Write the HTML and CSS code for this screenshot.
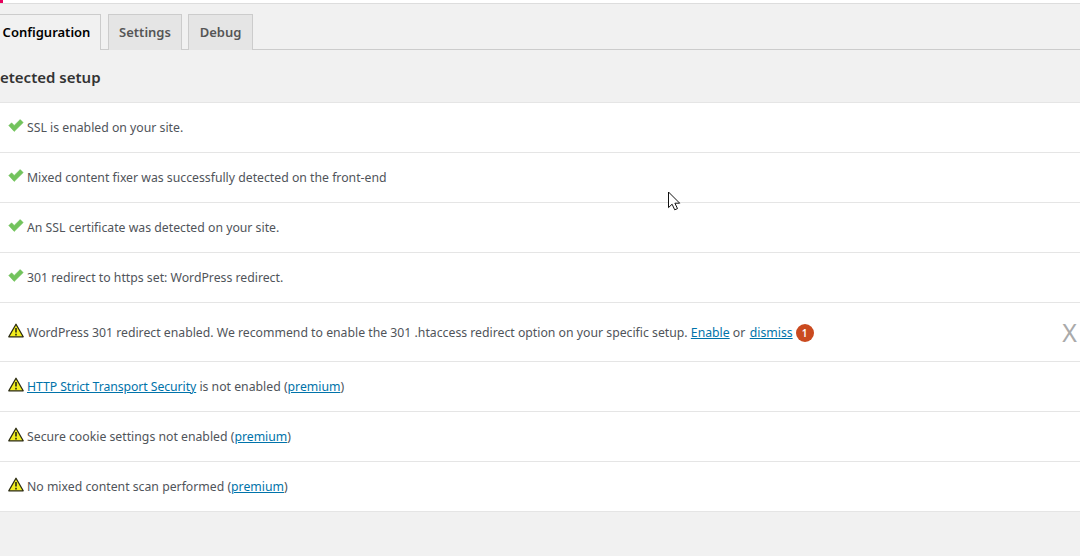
FILE: index.html
```html
<!DOCTYPE html>
<html lang="en">
<head>
<meta charset="utf-8">
<title>SSL configuration</title>
<link rel="stylesheet" href="styles.css">
</head>
<body>
<svg class="defs" width="0" height="0" aria-hidden="true">
  <symbol id="check" viewBox="0 0 16 13"><path d="M.8 6.6 3.6 3.8 6.2 6.4 12.2.6 15.2 3.6 6.2 12.4Z" fill="#72c35c" stroke="#72c35c" stroke-width=".6" stroke-linejoin="round"/></symbol>
  <symbol id="warn" viewBox="0 0 16 15"><path d="M8 1.2 15.2 13.8H.8Z" fill="#f2ee1e" stroke="#2a2a12" stroke-width="1.3" stroke-linejoin="round"/><path d="M8 5v4.6M8 10.8v1.6" stroke="#2a2a12" stroke-width="1.6"/></symbol>
</svg>
<div class="topbar"><span class="accent"></span></div>
<nav class="tabs">
  <a class="tab tab-active">Configuration</a>
  <a class="tab tab-settings">Settings</a>
  <a class="tab tab-debug">Debug</a>
</nav>
<h2 class="heading">Detected setup</h2>
<ul class="list">
  <li class="row"><svg class="icon"><use href="#check"/></svg><span>SSL is enabled on your site.</span></li>
  <li class="row"><svg class="icon"><use href="#check"/></svg><span>Mixed content fixer was successfully detected on the front-end</span></li>
  <li class="row"><svg class="icon"><use href="#check"/></svg><span>An SSL certificate was detected on your site.</span></li>
  <li class="row"><svg class="icon"><use href="#check"/></svg><span>301 redirect to https set: WordPress redirect.</span></li>
  <li class="row row-tall"><svg class="icon icon-warn"><use href="#warn"/></svg><span>WordPress 301 redirect enabled. We recommend to enable the 301 .htaccess redirect option on your specific setup. <a class="link" href="#">Enable</a> or&nbsp; <a class="link link-dismiss" href="#">dismiss</a></span><span class="badge">1</span><span class="close">X</span></li>
  <li class="row"><svg class="icon icon-warn"><use href="#warn"/></svg><span><a class="link link-tight" href="#">HTTP Strict Transport Security</a> is not enabled (<a class="link" href="#">premium</a>)</span></li>
  <li class="row"><svg class="icon icon-warn"><use href="#warn"/></svg><span>Secure cookie settings not enabled (<a class="link" href="#">premium</a>)</span></li>
  <li class="row"><svg class="icon icon-warn"><use href="#warn"/></svg><span>No mixed content scan performed (<a class="link" href="#">premium</a>)</span></li>
</ul>
<svg class="cursor" width="14" height="20" viewBox="0 0 14 20"><path d="M1.5 1v15.6l3.6-3.4 2.6 5.6 2.8-1.2-2.6-5.4h4.8Z" fill="#fff" stroke="#111" stroke-width="1"/></svg>
</body>
</html>
```
FILE: styles.css
```css
* { box-sizing: border-box; }
html, body { margin: 0; height: 100%; }
body {
  background: #f1f1f1;
  color: #50545a;
  font-family: "Noto Sans", sans-serif;
  font-size: 12.25px;
  overflow: hidden;
  position: relative;
}
.defs { position: absolute; }
.topbar {
  height: 4px;
  background: #fff;
  border-bottom: 1px solid #ddd;
}
.accent { display: block; width: 3px; height: 3px; background: #e6005c; }
.tabs {
  display: flex;
  height: 46px;
  padding-top: 10px;
  margin-left: -8px;
  border-bottom: 1px solid #ccc;
  font-weight: 600;
  font-size: 13px;
}
.tab {
  display: flex;
  align-items: center;
  justify-content: center;
  height: 36px;
  padding-bottom: 2px;
  margin-right: 6px;
  background: #e5e5e5;
  color: #555;
  border: 1px solid #ccc;
  border-bottom: 0;
}
.tab-active {
  width: 109px;
  background: #f1f1f1;
  color: #000;
  margin-right: 7px;
  position: relative;
  z-index: 1;
}
.tab-settings { width: 74px; }
.tab-debug { width: 65px; }
.heading {
  margin: 0 0 0 -11px;
  height: 52px;
  padding-top: 15px;
  font-size: 15px;
  line-height: 24px;
  font-weight: 600;
  color: #333;
}
.list {
  list-style: none;
  margin: 0;
  padding: 0;
  background: #fff;
  border-top: 1px solid #e5e5e5;
}
.row {
  display: flex;
  align-items: flex-start;
  height: 50px;
  padding: 16px 0 0 8px;
  line-height: 18px;
  border-bottom: 1px solid #e5e5e5;
}
.row-tall { height: 59px; padding-top: 21px; }
.icon { width: 16px; height: 13px; margin: 0 3px 0 0; flex: none; }
.icon-warn { height: 15px; margin-top: -1px; }
.link { color: #0073aa; text-decoration: underline; }
.link-dismiss { margin-left: -2px; }
.link-tight { letter-spacing: -0.07px; }
.badge {
  width: 18px;
  height: 18px;
  margin-left: 3px;
  border-radius: 50%;
  background: #ca4a1f;
  color: #fff;
  font-size: 10px;
  font-weight: 600;
  text-align: center;
}
.close {
  margin-left: auto;
  margin-right: 3px;
  margin-top: -4px;
  font-size: 25px;
  line-height: 24px;
  color: #aaa;
}
.cursor { position: absolute; left: 667px; top: 191px; }
```
